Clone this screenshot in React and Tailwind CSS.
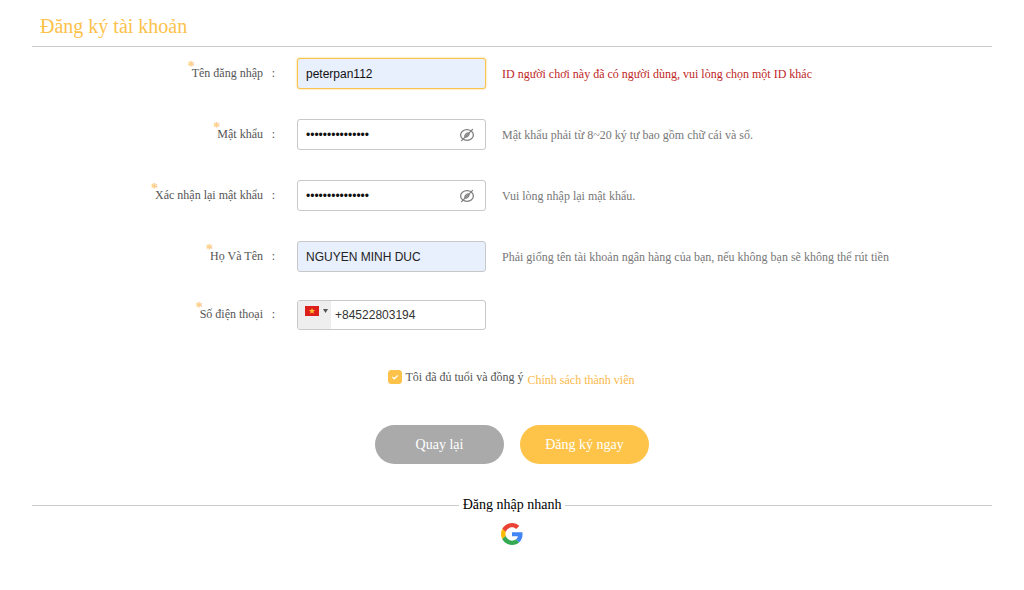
import React, { useState } from 'react';

const inputClass =
  'block h-[31px] w-full rounded-[3px] border border-[#c8c8c8] bg-white px-2 font-["Liberation_Sans",sans-serif] text-[12px] text-[#111] outline-none';

const initialForm = {
  username: 'peterpan112',
  password: 'peterpan1122024',
  confirm: 'peterpan1122024',
  fullName: 'NGUYEN MINH DUC',
  phone: '+84522803194',
};

function HiddenEyeIcon() {
  return (
    <svg className="h-4 w-4" viewBox="0 0 16 16" fill="none" stroke="#808080" strokeWidth="1.3" strokeLinecap="round">
      <ellipse cx="8" cy="8" rx="6.4" ry="5.3" />
      <ellipse cx="8" cy="8" rx="2.6" ry="1.3" transform="rotate(-45 8 8)" />
      <path d="M2.6 13.6 13.6 2.4" />
    </svg>
  );
}

function VietnamFlag() {
  return (
    <svg className="h-[10px] w-[14px]" viewBox="0 0 14 10">
      <rect width="14" height="10" fill="#dc1f1b" />
      <path fill="#ffc02e" d="M7 1.8 7.8 4.1h2.4L8.3 5.5 9 7.8 7 6.4 5 7.8l.7-2.3-1.9-1.4h2.4z" />
    </svg>
  );
}

function GoogleIcon() {
  return (
    <svg className="h-[22px] w-[22px]" viewBox="0 0 48 48">
      <path fill="#EA4335" d="M24 9.5c3.54 0 6.71 1.22 9.21 3.6l6.85-6.85C35.9 2.38 30.47 0 24 0 14.62 0 6.51 5.38 2.56 13.22l7.98 6.19C12.43 13.72 17.74 9.5 24 9.5z" />
      <path fill="#4285F4" d="M46.98 24.55c0-1.57-.15-3.09-.38-4.55H24v9.02h12.94c-.58 2.96-2.26 5.48-4.78 7.18l7.73 6c4.51-4.18 7.09-10.36 7.09-17.65z" />
      <path fill="#FBBC05" d="M10.53 28.59c-.48-1.45-.76-2.99-.76-4.59s.27-3.14.76-4.59l-7.98-6.19C.92 16.46 0 20.12 0 24c0 3.88.92 7.54 2.56 10.78l7.97-6.19z" />
      <path fill="#34A853" d="M24 48c6.48 0 11.93-2.13 15.89-5.81l-7.73-6c-2.15 1.45-4.92 2.3-8.16 2.3-6.26 0-11.57-4.22-13.47-9.91l-7.98 6.19C6.51 42.62 14.62 48 24 48z" />
    </svg>
  );
}

function FormRow({ id, label, hint, error, children }) {
  return (
    <div className="grid grid-cols-[243px_211px_1fr] items-center">
      <div className="flex justify-end pb-0.5 text-[12px] text-[#555]">
        <label htmlFor={id} className="relative">
          <span className="absolute -left-1 -top-1 text-[14px] font-bold leading-none text-[#fccb85]">*</span>
          {label}
        </label>
        <span className="w-3 text-right">:</span>
      </div>
      <div className="pl-[22px]">{children}</div>
      <p className={error ? 'pl-4 text-[12px] text-[#c01f1f]' : 'pl-4 text-[12px] text-[#777]'}>{hint}</p>
    </div>
  );
}

export default function App() {
  const [form, setForm] = useState(initialForm);
  const [showPassword, setShowPassword] = useState(false);
  const [showConfirm, setShowConfirm] = useState(false);
  const [agreed, setAgreed] = useState(true);

  const handleChange = (e) => {
    setForm({ ...form, [e.target.name]: e.target.value });
  };

  return (
    <div className='min-h-screen bg-white px-8 font-["Liberation_Serif",serif]'>
      <header className="border-b border-[#ccc] px-2 pb-1.5 pt-3">
        <h1 className="text-[20px] leading-7 text-[#fcc24a]">Đăng ký tài khoản</h1>
      </header>

      <form onSubmit={(e) => e.preventDefault()}>
        <div className="flex flex-col gap-[30px] pt-[11px]">
          <FormRow id="username" label="Tên đăng nhập" error hint="ID người chơi này đã có người dùng, vui lòng chọn một ID khác">
            <input
              id="username"
              name="username"
              value={form.username}
              onChange={handleChange}
              className='block h-[31px] w-full rounded-[3px] border border-[#fbc44d] bg-[#e8f0fe] px-2 font-["Liberation_Sans",sans-serif] text-[12px] text-[#111] shadow-[0_0_2px_#fbc44d] outline-none'
            />
          </FormRow>

          <FormRow id="password" label="Mật khẩu" hint="Mật khẩu phải từ 8~20 ký tự bao gồm chữ cái và số.">
            <div className="relative">
              <input
                id="password"
                name="password"
                type={showPassword ? 'text' : 'password'}
                value={form.password}
                onChange={handleChange}
                className={inputClass}
              />
              <button
                type="button"
                aria-label="Hiện mật khẩu"
                onClick={() => setShowPassword(!showPassword)}
                className="absolute inset-y-0 right-[11px] flex items-center"
              >
                <HiddenEyeIcon />
              </button>
            </div>
          </FormRow>

          <FormRow id="confirm" label="Xác nhận lại mật khẩu" hint="Vui lòng nhập lại mật khẩu.">
            <div className="relative">
              <input
                id="confirm"
                name="confirm"
                type={showConfirm ? 'text' : 'password'}
                value={form.confirm}
                onChange={handleChange}
                className={inputClass}
              />
              <button
                type="button"
                aria-label="Hiện mật khẩu"
                onClick={() => setShowConfirm(!showConfirm)}
                className="absolute inset-y-0 right-[11px] flex items-center"
              >
                <HiddenEyeIcon />
              </button>
            </div>
          </FormRow>

          <FormRow id="fullName" label="Họ Và Tên" hint="Phải giống tên tài khoản ngân hàng của bạn, nếu không bạn sẽ không thể rút tiền">
            <input
              id="fullName"
              name="fullName"
              value={form.fullName}
              onChange={handleChange}
              className='block h-[31px] w-full rounded-[3px] border border-[#c8c8c8] bg-[#e8f0fe] px-2 font-["Liberation_Sans",sans-serif] text-[12px] text-[#222] outline-none'
            />
          </FormRow>
        </div>

        <div className="pt-7">
          <FormRow id="phone" label="Số điện thoại">
            <div className="flex h-[30px] overflow-hidden rounded-[3px] border border-[#c8c8c8]">
              <div className="relative flex w-[33px] items-start gap-1 bg-[#eee] pl-[7px] pt-[5px]">
                <VietnamFlag />
                <svg className="mt-[3px] h-1 w-[5px]" viewBox="0 0 5 4">
                  <path d="M0 0h5L2.5 4z" fill="#555" />
                </svg>
                <select aria-label="Mã quốc gia" className="absolute inset-0 w-full opacity-0">
                  <option value="vn">+84</option>
                </select>
              </div>
              <input
                id="phone"
                name="phone"
                type="tel"
                value={form.phone}
                onChange={handleChange}
                className='min-w-0 flex-1 px-1 font-["Liberation_Sans",sans-serif] text-[12px] text-[#333] outline-none'
              />
            </div>
          </FormRow>
        </div>

        <div className="mt-[38px] flex items-start justify-center gap-1 pr-0.5 text-[12px] leading-[18px]">
          <label className="flex items-center gap-1 text-[#555]">
            <span className="relative h-[14px] w-[14px]">
              <input
                type="checkbox"
                checked={agreed}
                onChange={(e) => setAgreed(e.target.checked)}
                className="block h-[14px] w-[14px] appearance-none rounded-[3px] border border-[#fcc24a] checked:bg-[#fcc24a]"
              />
              {agreed && (
                <svg className="pointer-events-none absolute inset-0 h-[14px] w-[14px]" viewBox="0 0 14 14" fill="none" stroke="#fff" strokeWidth="1.3">
                  <path d="m4.5 7 1.8 1.8L9.8 5.4" />
                </svg>
              )}
            </span>
            Tôi đã đủ tuổi và đồng ý
          </label>
          <a href="#policy" className="pt-[3px] text-[#fbb94a]">Chính sách thành viên</a>
        </div>

        <div className="mt-9 flex justify-center gap-4 text-[14px] text-white">
          <button type="button" className="h-[39px] w-[129px] rounded-full bg-[#aaa]">Quay lại</button>
          <button type="submit" className="h-[39px] w-[129px] rounded-full bg-[#fec449]">Đăng ký ngay</button>
        </div>
      </form>

      <div className="mt-[31px] flex items-center gap-1 text-[14px] leading-5 text-black">
        <span className="h-px flex-1 bg-[#ccc]" />
        <h2>Đăng nhập nhanh</h2>
        <span className="h-px flex-1 bg-[#ccc]" />
      </div>
      <div className="mt-2 flex justify-center">
        <button type="button" aria-label="Google">
          <GoogleIcon />
        </button>
      </div>
    </div>
  );
}
